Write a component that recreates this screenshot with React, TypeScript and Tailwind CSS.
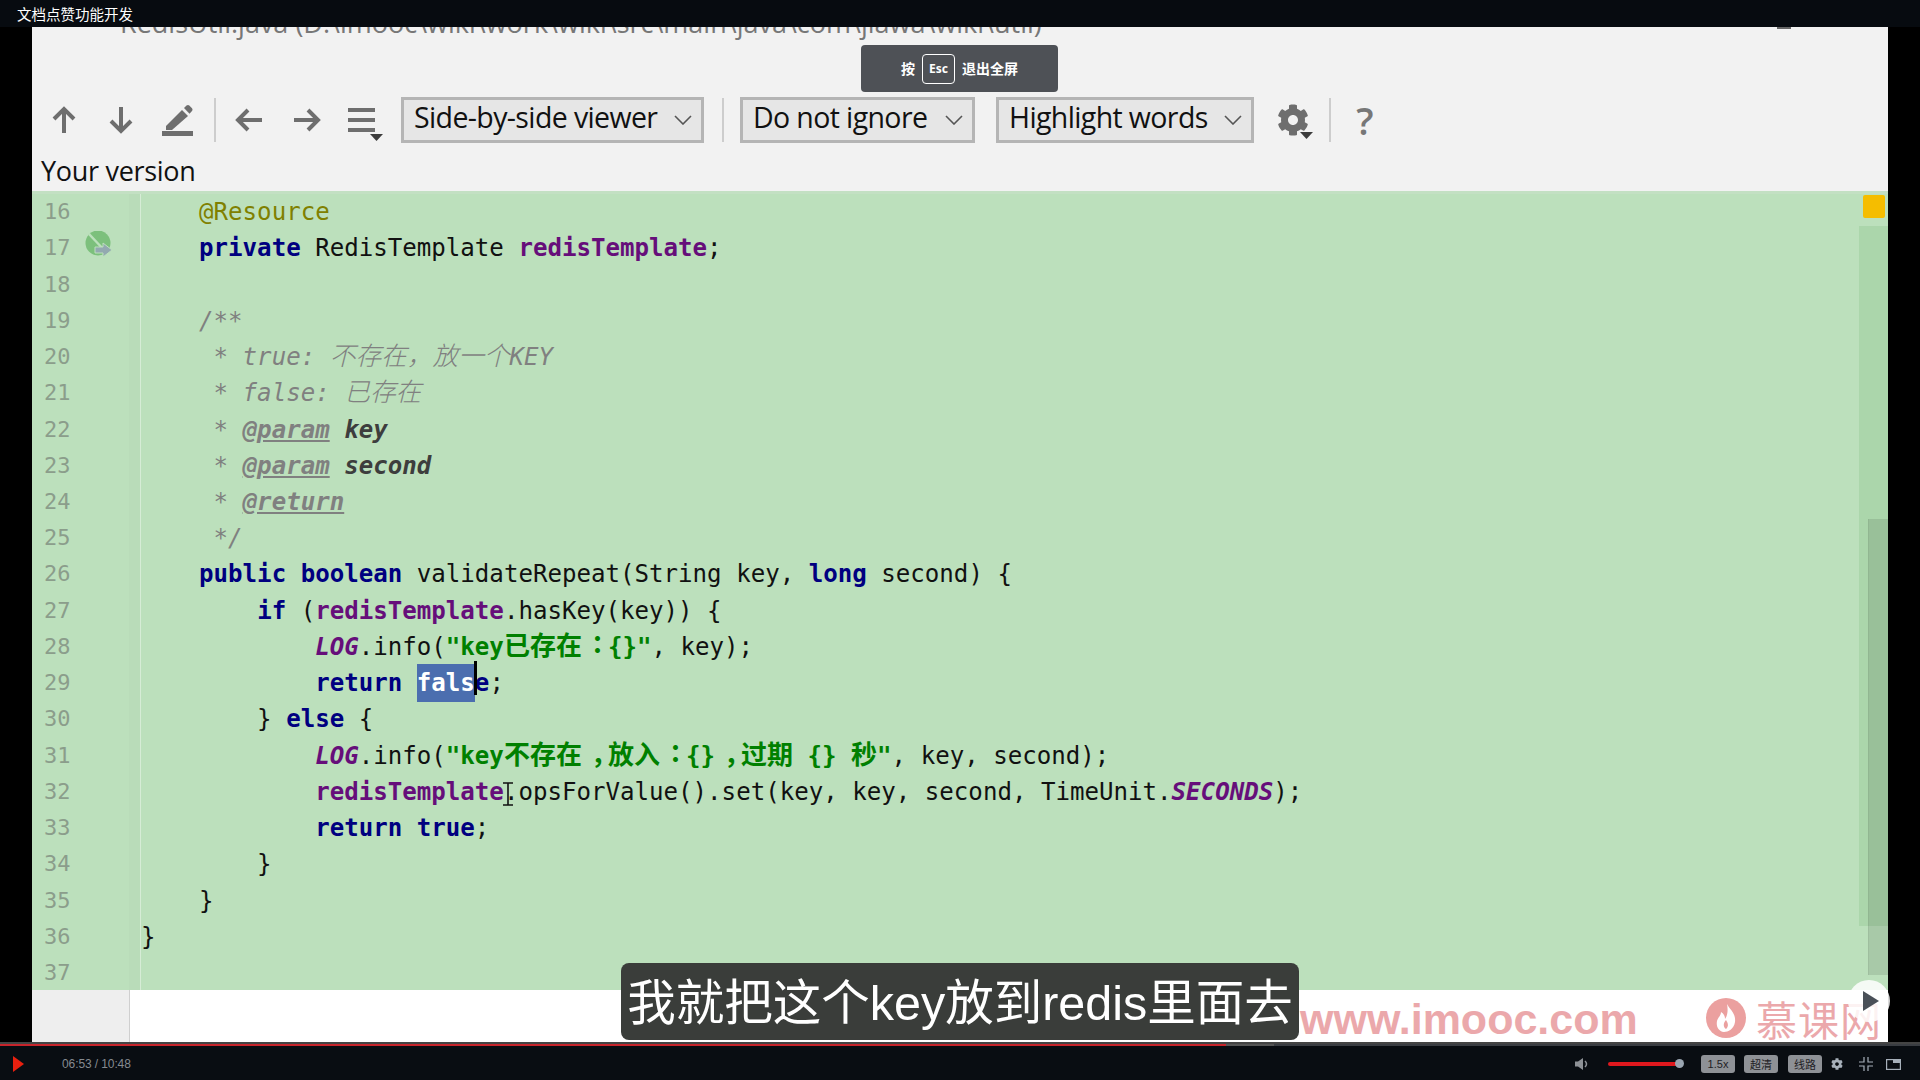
import React from "react";
import { FaCog } from "react-icons/fa";

type Seg = [string, string?];
const KW = "font-bold text-[#000080]";
const FD = "font-bold text-[#660e7a]";
const SF = "font-bold italic text-[#660e7a]";
const ST = "font-bold text-[#008000]";
const SC = "font-bold text-[#008000] text-[26px] leading-none font-['Noto_Sans_CJK_SC',sans-serif]";
const PU = "inline-block font-bold text-[#008000] text-[26px] leading-none font-['Noto_Sans_CJK_SC',sans-serif] pl-[9px] tracking-[-9px]";
const PC = "inline-block font-bold text-[#008000] text-[26px] leading-none font-['Noto_Sans_CJK_SC',sans-serif] pl-[9px] tracking-[-9px] translate-y-[-2px]";
const CM = "italic text-[#808080]";
const CC = "italic font-light text-[#808080] text-[25.7px] leading-none font-['Noto_Sans_CJK_SC',sans-serif]";
const TG = "italic font-bold text-[#808080] underline underline-offset-2";
const PN = "italic font-bold text-[#3d3d3d]";
const AN = "text-[#808000]";

const lines: Seg[][] = [
  [["    "], ["@Resource", AN]],
  [["    "], ["private", KW], [" RedisTemplate "], ["redisTemplate", FD], [";"]],
  [],
  [["    "], ["/**", CM]],
  [["     * true: ", CM], ["不存在，放一个", CC], ["KEY", CM]],
  [["     * false: ", CM], ["已存在", CC]],
  [["     * ", CM], ["@param", TG], [" "], ["key", PN]],
  [["     * ", CM], ["@param", TG], [" "], ["second", PN]],
  [["     * ", CM], ["@return", TG]],
  [["     */", CM]],
  [["    "], ["public boolean", KW], [" validateRepeat(String key, "], ["long", KW], [" second) {"]],
  [["        "], ["if", KW], [" ("], ["redisTemplate", FD], [".hasKey(key)) {"]],
  [["            "], ["LOG", SF], [".info("], ['"key', ST], ["已存在", SC], ["：", PC], ['{}"', ST], [", key);"]],
  [["            "], ["return", KW], [" "], ["fals", "font-bold text-white bg-[#4b6eaf] py-[5px]"], ["e", KW], [";"]],
  [["        } "], ["else", KW], [" {"]],
  [["            "], ["LOG", SF], [".info("], ['"key', ST], ["不存在", SC], ["，", PU], ["放入", SC], ["：", PC], ["{}", ST], ["，", PU], ["过期", SC], [" {} ", ST], ["秒", SC], ['"', ST], [", key, second);"]],
  [["            "], ["redisTemplate", FD], [".opsForValue().set(key, key, second, TimeUnit."], ["SECONDS", SF], [");"]],
  [["            "], ["return true", KW], [";"]],
  [["        }"]],
  [["    }"]],
  [["}"]],
  [],
];

function Arrow({ dir }: { dir: "up" | "down" | "left" | "right" }) {
  const rot = { up: 0, down: 180, left: -90, right: 90 }[dir];
  return (
    <svg viewBox="0 0 28 28" className="w-[28px] h-[28px] shrink-0">
      <g transform={`rotate(${rot} 14 14)`} fill="none" stroke="#6e6e6e" strokeWidth="4">
        <path d="M14 27V3" />
        <path d="M4 13L14 3L24 13" />
      </g>
    </svg>
  );
}

function Chevron() {
  return (
    <svg viewBox="0 0 18 10" className="w-[18px] h-[10px]">
      <path d="M1 1L9 9L17 1" fill="none" stroke="#555" strokeWidth="1.6" />
    </svg>
  );
}

function Select({ label, width }: { label: string; width: string }) {
  return (
    <div className={`${width} h-[46px] shrink-0 border-[3px] border-[#b5b5b5] bg-[#e6e6e6] flex items-center justify-between pl-[10px] pr-[9px] text-[28.5px] text-[#111] font-['Open_Sans',sans-serif] tracking-[-0.62px]`}>
      <span className="whitespace-pre pb-[5px]">{label}</span>
      <Chevron />
    </div>
  );
}

const Divider = ({ cls }: { cls: string }) => <div className={`${cls} w-[2px] h-[44px] bg-[#cdcdcd] shrink-0`} />;

export default function App() {
  return (
    <div className="relative w-[1920px] h-[1080px] overflow-hidden bg-black flex flex-col">
      {/* title bar */}
      <div className="h-[27px] shrink-0 bg-[#070b10] flex items-center pl-[17px] text-[14.5px] text-white font-['Noto_Sans_CJK_SC',sans-serif]">
        文档点赞功能开发
      </div>

      <div className="flex-1 flex min-h-0">
        <div className="w-[32px] shrink-0 bg-black" />
        <div className="flex-1 flex flex-col min-w-0 bg-[#f2f2f2]">
          {/* clipped file path */}
          <div className="h-[70px] shrink-0 overflow-hidden">
            <div className="mt-[-22px] pl-[88px] pr-[97px] flex justify-between items-start">
              <span className="text-[27px] leading-[36px] text-[#777] whitespace-pre font-['Open_Sans',sans-serif]">
                {"RedisUtil.java (D:\\imooc\\wiki\\work\\wiki\\src\\main\\java\\com\\jiawa\\wiki\\util)"}
              </span>
              <span className="w-[14px] h-[24px] border-b-[2px] border-[#666]" />
            </div>
          </div>

          {/* toolbar */}
          <div className="h-[46px] shrink-0 flex items-center">
            <div className="ml-[18px]"><Arrow dir="up" /></div>
            <div className="ml-[29px]"><Arrow dir="down" /></div>
            <svg viewBox="0 0 33 32" className="ml-[26px] w-[33px] h-[32px] shrink-0">
              <path d="M5 22L21 6L27 12L11 26H5Z" fill="#6e6e6e" />
              <path d="M23 4L25.5 1.5C26.5 .8 27.5 .8 28.3 1.5L31 4.2C31.7 5 31.7 6 31 7L28.5 9.8Z" fill="#6e6e6e" />
              <rect x="1" y="27" width="31" height="5" fill="#6e6e6e" />
            </svg>
            <Divider cls="ml-[20px]" />
            <div className="ml-[19px]"><Arrow dir="left" /></div>
            <div className="ml-[30px]"><Arrow dir="right" /></div>
            <svg viewBox="0 0 35 36" className="ml-[27px] mt-[5px] w-[35px] h-[36px] shrink-0">
              <rect x="0" y="3" width="27" height="4" fill="#6e6e6e" />
              <rect x="0" y="13" width="27" height="4" fill="#6e6e6e" />
              <rect x="0" y="23" width="27" height="4" fill="#6e6e6e" />
              <path d="M22 29H35L28.5 36Z" fill="#3c3c3c" />
            </svg>
            <div className="ml-[18px]"><Select label="Side-by-side viewer" width="w-[303px]" /></div>
            <Divider cls="ml-[18px]" />
            <div className="ml-[16px]"><Select label="Do not ignore" width="w-[235px]" /></div>
            <div className="ml-[21px]"><Select label="Highlight words" width="w-[258px]" /></div>
            <div className="ml-[23px] w-[36px] h-[38px] shrink-0 relative pt-[3px]">
              <FaCog className="text-[#6e6e6e] w-[32px] h-[32px]" />
              <svg viewBox="0 0 13 7" className="absolute right-0 bottom-0 w-[13px] h-[7px]">
                <path d="M0 0H13L6.5 7Z" fill="#3c3c3c" />
              </svg>
            </div>
            <Divider cls="ml-[16px]" />
            <span className="ml-[23px] w-[22px] text-center text-[38px] leading-[44px] text-[#777] font-['Open_Sans',sans-serif] font-semibold">?</span>
          </div>

          <div className="h-[48px] shrink-0 pl-[9px] pt-[8px] text-[27px] leading-[40px] text-[#111] font-['Open_Sans',sans-serif] tracking-[-0.3px]">
            Your version
          </div>

          {/* editor */}
          <div className="relative h-[799px] shrink-0 bg-[#bce0bc] border-t-[3px] border-[#c3e0c3] font-['DejaVu_Sans_Mono','Noto_Sans_CJK_SC',monospace] overflow-hidden">
            {lines.map((segs, i) => (
              <div key={i} className="flex h-[36.24px] items-center">
                <div className="w-[97px] shrink-0 relative pl-[12px] text-[22px] leading-[36px] text-[#8b9d8b]">
                  {16 + i}
                  {i === 1 && (
                    <svg viewBox="0 0 28 28" className="absolute left-[53px] top-[1px] w-[28px] h-[28px]">
                      <circle cx="13" cy="12" r="12.5" fill="#7cc07c" />
                      <path d="M4 3L20 20" stroke="#bce0bc" strokeWidth="2.5" />
                      <path d="M10 16H18V12L27 19L18 26V22H10Z" fill="#93a9b0" stroke="#bce0bc" strokeWidth="1" />
                    </svg>
                  )}
                </div>
                <div className="w-[11px] h-full shrink-0 bg-[#b9dcb9]" />
                <div className="w-[1px] h-full shrink-0 bg-[#d6ecd6]" />
                <pre className="flex-1 text-[24.12px] leading-[36px] text-[#111] whitespace-pre font-['DejaVu_Sans_Mono','Noto_Sans_CJK_SC',monospace]">
                  {segs.map(([t, c], j) => (
                    <span key={j} className={c}>{t}</span>
                  ))}
                </pre>
              </div>
            ))}
            {/* caret over "false" */}
            <div className="absolute left-[442px] top-[467px] w-[3px] h-[34px] bg-black" />
            {/* scrollbar + marker */}
            <div className="absolute right-0 top-[32px] w-[29px] h-[700px] bg-[#abd6ab]" />
            <div className="absolute right-0 top-[325px] w-[20px] h-[456px] bg-black/10 border-l border-black/5" />
            <div className="absolute right-[3px] top-[1px] w-[22px] h-[23px] rounded-[2px] bg-[#f5bd00]" />
          </div>

          {/* area below editor */}
          <div className="flex-1 flex min-h-0 bg-white">
            <div className="w-[98px] shrink-0 bg-[#eeeeee] border-r border-[#cfcfcf]" />
          </div>
        </div>
        <div className="w-[32px] shrink-0 bg-black" />
      </div>

      {/* player bar */}
      <div className="h-[38px] shrink-0 bg-[#090d12] flex flex-col">
        <div className="h-[2px] bg-[#444]" />
        <div className="h-[2px] flex bg-[#3a3d42]">
          <div className="w-[1226px] bg-[#c8242b]" />
          <div className="w-[48px] bg-[#555]" />
        </div>
        <div className="flex-1 flex items-center pt-[2px]">
          <svg viewBox="0 0 11 16" className="ml-[13px] w-[11px] h-[16px] shrink-0">
            <path d="M0 0L11 8L0 16Z" fill="#e8200f" />
          </svg>
          <span className="ml-[38px] w-[67px] text-[12px] text-[#858a90] font-['Liberation_Sans',sans-serif] tracking-[-0.1px] whitespace-pre">06:53 / 10:48</span>
          <svg viewBox="0 0 14 14" className="ml-[1446px] w-[14px] h-[14px] shrink-0">
            <path d="M0 4.5H3L8 1V13L3 9.5H0Z" fill="#8d9196" />
            <path d="M10 4C12 6 12 8 10 10" fill="none" stroke="#8d9196" strokeWidth="1.5" />
          </svg>
          <div className="ml-[19px] w-[72px] h-[4px] rounded-full bg-[#e0181e] relative shrink-0">
            <div className="absolute right-[-4px] top-[-3px] w-[9px] h-[9px] rounded-full bg-[#9aa5b1]" />
          </div>
          <div className="ml-[21px] w-[34px] h-[18px] rounded-[3px] bg-[#8e9196] text-[#1e2024] text-[11px] leading-[18px] text-center font-['Liberation_Sans',sans-serif] shrink-0">1.5x</div>
          <div className="ml-[9px] w-[34px] h-[18px] rounded-[3px] bg-[#8e9196] text-[#1e2024] text-[11px] leading-[18px] text-center font-['Noto_Sans_CJK_SC',sans-serif] shrink-0">超清</div>
          <div className="ml-[10px] w-[34px] h-[18px] rounded-[3px] bg-[#8e9196] text-[#1e2024] text-[11px] leading-[18px] text-center font-['Noto_Sans_CJK_SC',sans-serif] shrink-0">线路</div>
          <FaCog className="ml-[9px] w-[12px] h-[12px] text-[#a7b0ba] shrink-0" />
          <svg viewBox="0 0 14 14" className="ml-[16px] w-[14px] h-[14px] shrink-0">
            <path d="M5 0V5H0M9 0V5H14M0 9H5V14M14 9H9V14" fill="none" stroke="#a7b0ba" strokeWidth="1.2" />
          </svg>
          <svg viewBox="0 0 15 11" className="ml-[13px] w-[15px] h-[11px] shrink-0">
            <rect x=".6" y=".6" width="13.8" height="9.8" fill="none" stroke="#a7b0ba" strokeWidth="1.2" />
            <rect x="7" y="0" width="8" height="4" fill="#a7b0ba" />
          </svg>
        </div>
      </div>

      {/* overlays */}
      <div className="absolute left-[861px] top-[45px] w-[197px] h-[47px] rounded-[4px] bg-[#4e5156] flex items-center justify-center text-white text-[14px] font-bold font-['Noto_Sans_CJK_SC',sans-serif]">
        <span>按</span>
        <span className="mx-[7px] w-[33px] h-[30px] border border-white rounded-[4px] flex items-center justify-center text-[12px] font-['Noto_Sans',sans-serif]">Esc</span>
        <span>退出全屏</span>
      </div>

      <svg viewBox="0 0 14 24" className="absolute left-[501px] top-[782px] w-[14px] h-[24px]">
        <path d="M2 1H12M7 1V23M2 23H12" fill="none" stroke="#111" strokeWidth="1.6" />
      </svg>

      <div className="absolute left-[1300px] top-[992px] h-[54px] flex items-center text-[#eba8ab] text-[43px] font-bold font-['Liberation_Sans',sans-serif] whitespace-pre">
        www.imooc.com
      </div>
      <svg viewBox="0 0 40 40" className="absolute left-[1706px] top-[998px] w-[40px] h-[40px]">
        <circle cx="20" cy="20" r="20" fill="#eba09f" />
        <path d="M21 6C24 12 30 15 29 24C28 31 22 34 18 34C12 33 10 28 11 23C12 19 15 18 15 14C18 16 19 18 19 21C22 17 22 11 21 6Z" fill="#fff" />
        <path d="M20 22C22 25 23 28 20 31C17 29 17 25 20 22Z" fill="#eba09f" />
      </svg>
      <div className="absolute left-[1756px] top-[994px] text-[#eba8ab] text-[41px] leading-[48px] tracking-[1px] font-['Noto_Sans_CJK_SC',sans-serif] whitespace-pre">慕课网</div>

      <div className="absolute left-[1848px] top-[980px] w-[42px] h-[42px] rounded-full bg-white/85 flex items-center justify-center">
        <svg viewBox="0 0 16 20" className="w-[16px] h-[20px] ml-[3px]">
          <path d="M0 0L16 10L0 20Z" fill="#4a5058" />
        </svg>
      </div>

      <div className="absolute left-[621px] top-[963px] w-[678px] h-[77px] rounded-[8px] bg-[#3a3d3a] flex items-center justify-center pt-[4px] text-white text-[48.5px] leading-[73px] font-['Liberation_Sans','Noto_Sans_CJK_SC',sans-serif] whitespace-pre">
        我就把这个key放到redis里面去
      </div>
    </div>
  );
}
